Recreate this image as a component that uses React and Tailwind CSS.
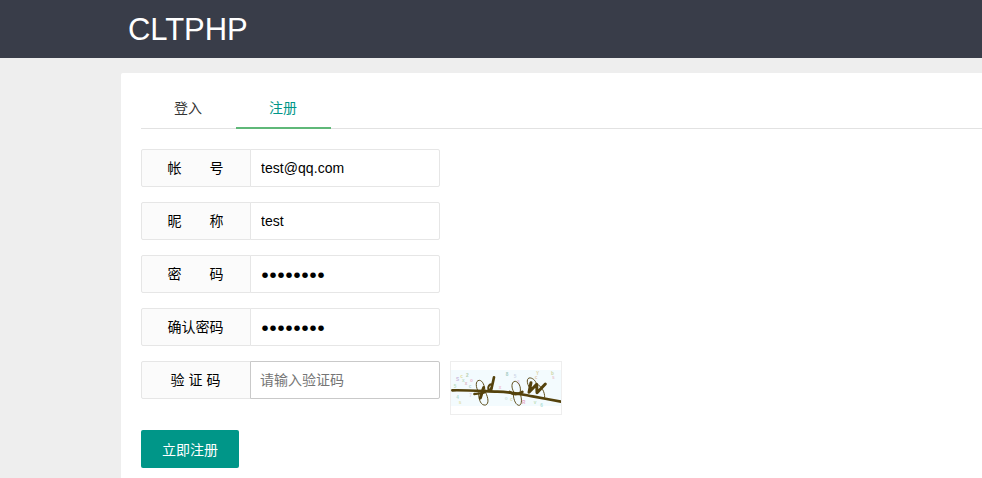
const rows = [
  { label: '帐\u3000\u3000号', type: 'text', value: 'test@qq.com' },
  { label: '昵\u3000\u3000称', type: 'text', value: 'test' },
  { label: '密\u3000\u3000码', type: 'mask', value: '●●●●●●●●' },
  { label: '确认密码', type: 'mask', value: '●●●●●●●●' },
];

const specks = [
  [52, 90, 'S', '#c9b8dc'], [65, 82, 'c', '#dfdba0'], [82, 79, '2', '#b5cfb1'], [94, 94, 'o', '#e8b6cb'],
  [45, 112, '5', '#b9ddc0'], [78, 103, 'x', '#dfb8c5'], [90, 110, 'c', '#b6d5d1'], [53, 145, '4', '#b3dcd3'],
  [60, 159, 's', '#e1dfa9'], [92, 139, '7', '#d8cfe5'], [201, 74, '8', '#a4cbc3'], [225, 82, '5', '#cfd8e8'],
  [180, 113, 'x', '#eec2d2'], [235, 100, '3', '#dbc4e1'], [292, 72, 'Y', '#dfd3a8'], [288, 84, 'c', '#dfc8ad'],
  [337, 72, 'b', '#cbd7a7'], [340, 84, 's', '#e8c6cd'], [250, 158, 'R', '#e5aac6'], [285, 160, 'v', '#c0e2bd'],
  [305, 169, '6', '#b1dfd9'], [214, 151, 'c', '#dfdbae'], [198, 147, 'o', '#cfe3df'], [70, 93, 'x', '#bfe0c9'],
];

function Captcha() {
  return (
    <svg viewBox="33 36 330 156" className="block h-[52px] w-[110px]" aria-label="验证码">
      <rect x="33" y="60" width="330" height="108" fill="#f3fbfe" />
      <g fontFamily="Liberation Sans" fontSize="14" fontWeight="bold">
        {specks.map(([x, y, c, fill], i) => (
          <text key={i} x={x - 4} y={y + 3} fill={fill}>{c}</text>
        ))}
      </g>
      <g fill="none" stroke="#54420c" strokeLinecap="round">
        <path d="M37 121 C80 120 121 123 172 125 S245 133 278 139 S330 149 363 155" strokeWidth="8" />
        <path d="M116 127 C107 113 105 91 118 91 C127 91 135 106 135 126" strokeWidth="2.8" />
        <path d="M116 132 C116 149 123 168 137 165 C148 161 144 142 138 130" strokeWidth="2.8" />
        <path d="M131 113 C127 122 125 133 121 144" strokeWidth="9" />
        <path d="M103 132 C118 130 134 131 138 123" strokeWidth="7" />
        <path d="M222 127 C211 110 216 93 226 94 C237 96 243 111 241 124" strokeWidth="2.8" />
        <path d="M220 132 C220 151 229 167 238 166 C247 163 245 144 241 132" strokeWidth="2.8" />
        <path d="M209 126 C219 134 234 133 247 126" strokeWidth="8" />
        <path d="M274 121 C261 105 258 88 267 84 C276 82 287 91 289 101" strokeWidth="2.8" />
        <path d="M291 103 C304 107 315 126 314 142" strokeWidth="2.8" />
        <path d="M162 82 C159 97 156 109 153 121" strokeWidth="8" />
        <path d="M156 104 C148 101 143 111 145 118 C147 122 153 118 156 112" strokeWidth="6.5" />
        <path d="M273 98 L267 127 L290 103 L291 128 L316 102" strokeWidth="9" strokeLinejoin="round" />
      </g>
    </svg>
  );
}

function Label({ children }) {
  return (
    <div className="h-[38px] w-[110px] shrink-0 whitespace-pre rounded-l-[2px] border border-[#e6e6e6] bg-[#fbfbfb] pr-px text-center leading-[36px] text-black">
      {children}
    </div>
  );
}

export default function App() {
  return (
    <div className='h-[478px] w-full overflow-hidden bg-[#eeeeee] font-["Liberation_Sans","Noto_Sans_CJK_SC",sans-serif] text-sm'>
      <header className="flex h-[58px] items-center bg-[#393d49] pl-32">
        <span className="text-[31px] leading-none tracking-[-0.05px] text-white">CLTPHP</span>
      </header>
      <main className="mt-[15px] ml-[121px] h-[420px] rounded-tl-[2px] bg-white pt-[15px] pl-5">
        <nav className="flex h-[41px] border-b border-[#e2e2e2] leading-10">
          <a className="w-[95px] pr-px text-center text-[#333333]">登入</a>
          <a className="h-[41px] w-[95px] border-b-2 border-[#5fb878] pr-px text-center text-[#009688]">注册</a>
        </nav>
        <form className="mt-5 flex flex-col gap-[15px]">
          {rows.map((row) => (
            <div key={row.label} className="flex">
              <Label>{row.label}</Label>
              {row.type === 'mask' ? (
                <div className="-ml-px h-[38px] w-[190px] rounded-r-[2px] border border-[#e6e6e6] bg-white pl-2.5 text-[13.25px] leading-[37px] text-black">
                  {row.value}
                </div>
              ) : (
                <input
                  defaultValue={row.value}
                  className="-ml-px h-[38px] w-[190px] rounded-r-[2px] border border-[#e6e6e6] bg-white pl-2.5 tracking-[0.05px] text-black outline-none"
                />
              )}
            </div>
          ))}
          <div className="flex items-start">
            <Label>验 证 码</Label>
            <input
              placeholder="请输入验证码"
              className="-ml-px h-[38px] w-[190px] rounded-r-[2px] border border-[#c9c9c9] bg-white pl-[9px] text-black outline-none placeholder:text-[#757575]"
            />
            <div className="ml-2.5 border border-[#eeeeee]">
              <Captcha />
            </div>
          </div>
          <button type="button" className="h-[38px] w-[98px] rounded-[2px] bg-[#009688] pt-px leading-[38px] text-white">
            立即注册
          </button>
        </form>
      </main>
    </div>
  );
}
